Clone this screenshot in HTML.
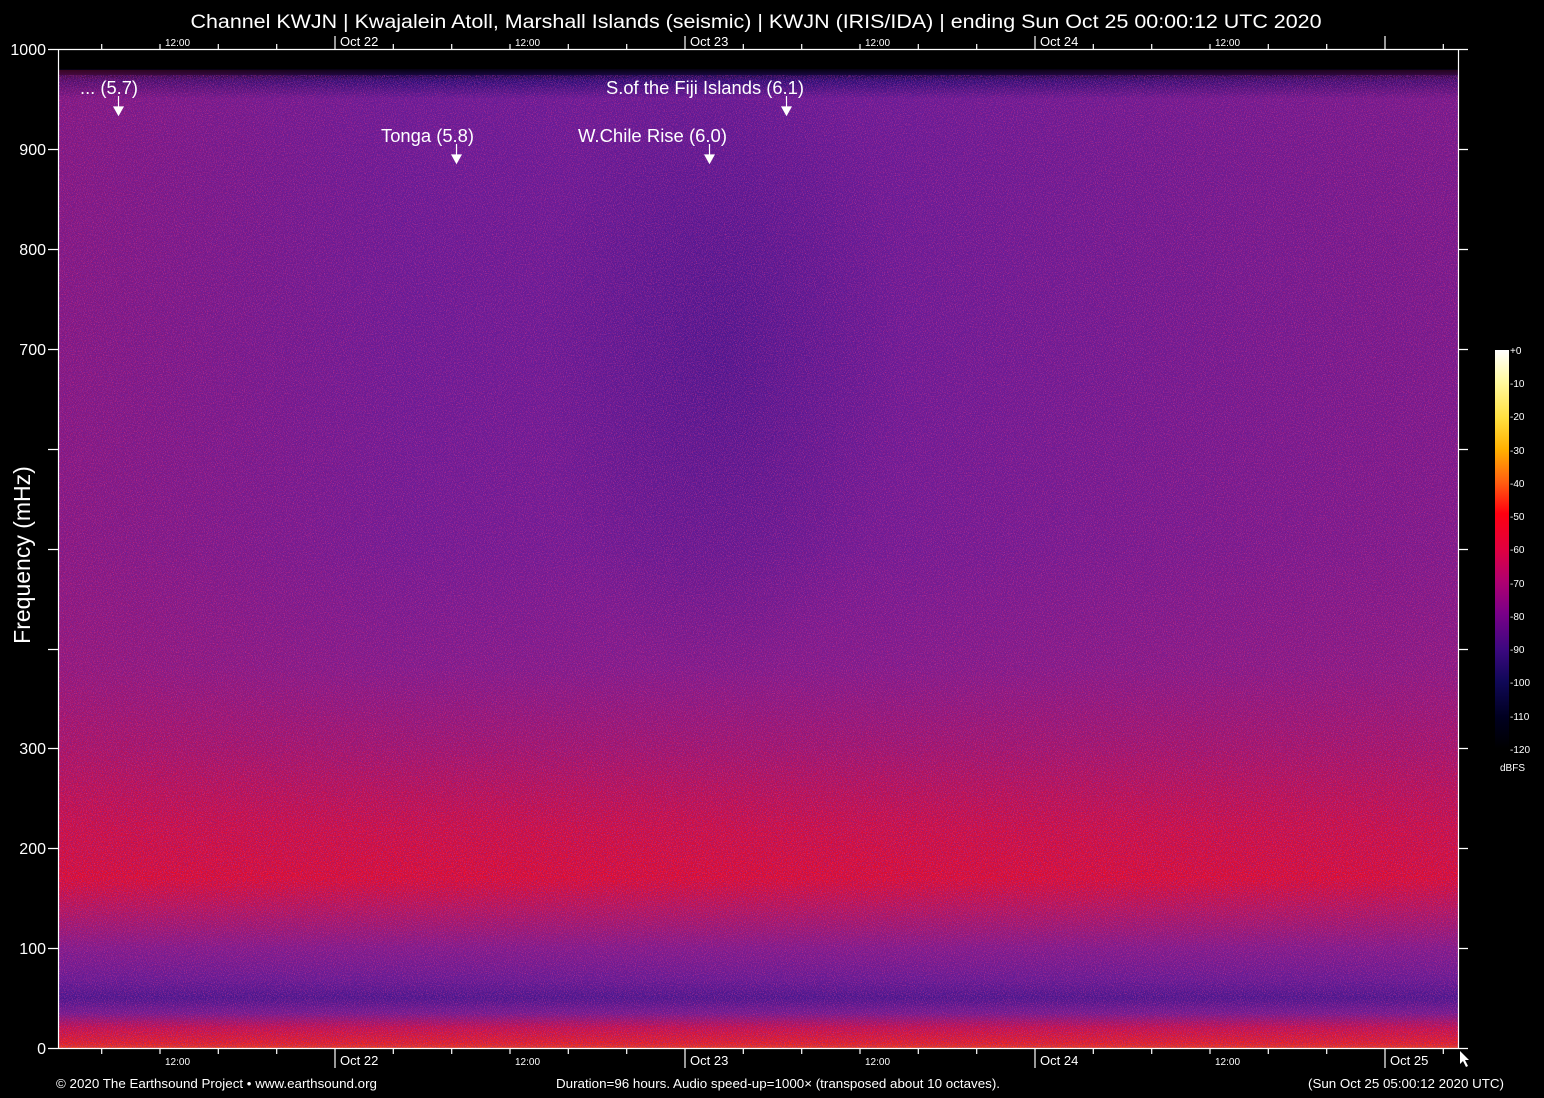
<!DOCTYPE html>
<html><head><meta charset="utf-8"><style>
html,body{margin:0;padding:0;background:#000;width:1544px;height:1098px;overflow:hidden}
svg{display:block}
text{font-family:"Liberation Sans",sans-serif;fill:#fff}
</style></head><body>
<svg width="1544" height="1098" viewBox="0 0 1544 1098" xmlns="http://www.w3.org/2000/svg">
<defs>
<linearGradient id="v" x1="0" y1="49" x2="0" y2="1048" gradientUnits="userSpaceOnUse">
<stop offset="0" stop-color="#000"/>
<stop offset="0.018" stop-color="#000"/>
<stop offset="0.032" stop-color="#2a0d70"/>
<stop offset="0.05" stop-color="#6a1a90"/>
<stop offset="0.3" stop-color="#6c1a90"/>
<stop offset="0.5" stop-color="#741a8e"/>
<stop offset="0.62" stop-color="#861a84"/>
<stop offset="0.7" stop-color="#a81464"/>
<stop offset="0.78" stop-color="#d80e36"/>
<stop offset="0.83" stop-color="#e80c24"/>
<stop offset="0.86" stop-color="#c01450"/>
<stop offset="0.9" stop-color="#861a84"/>
<stop offset="0.93" stop-color="#681a8e"/>
<stop offset="0.95" stop-color="#481588"/>
<stop offset="0.965" stop-color="#761a88"/>
<stop offset="0.98" stop-color="#d01040"/>
<stop offset="0.995" stop-color="#f02018"/>
<stop offset="1" stop-color="#f04010"/>
</linearGradient>
<radialGradient id="dark" cx="720" cy="350" r="260" gradientUnits="userSpaceOnUse" gradientTransform="translate(720 350) scale(0.7 1.3) translate(-720 -350)">
<stop offset="0" stop-color="#2a1080" stop-opacity="0.45"/>
<stop offset="1" stop-color="#2a1080" stop-opacity="0"/>
</radialGradient>
<linearGradient id="h" x1="58" x2="1458" y1="0" y2="0" gradientUnits="userSpaceOnUse">
<stop offset="0" stop-color="#d01040" stop-opacity="0.25"/>
<stop offset="0.25" stop-color="#d01040" stop-opacity="0"/>
<stop offset="0.6" stop-color="#d01040" stop-opacity="0"/>
<stop offset="1" stop-color="#d01040" stop-opacity="0.15"/>
</linearGradient>
<filter id="n" x="0" y="0" width="100%" height="100%">
<feTurbulence type="fractalNoise" baseFrequency="1.2" numOctaves="1" seed="3"/>
<feColorMatrix type="matrix" values="0 0 0 0 0.1  0 0 0 0 0.02  0 0 0 0 0.45  0 0 0 -5 2.6"/>
</filter>
<filter id="n2" x="0" y="0" width="100%" height="100%">
<feTurbulence type="fractalNoise" baseFrequency="1.1" numOctaves="1" seed="9"/>
<feColorMatrix type="matrix" values="0 0 0 0 0.9  0 0 0 0 0.05  0 0 0 0 0.3  0 0 0 -5 2.5"/>
</filter>
</defs>
<rect x="58" y="49" width="1400" height="999" fill="url(#v)"/>
<rect x="58" y="70" width="1400" height="800" fill="url(#h)"/>
<rect x="450" y="100" width="550" height="600" fill="url(#dark)"/>
<rect x="58" y="75" width="1400" height="973" filter="url(#n2)" opacity="0.5"/>
<rect x="58" y="75" width="1400" height="973" filter="url(#n)" opacity="0.6"/>
<rect x="58" y="49" width="1400" height="20" fill="#000"/>
<g stroke="#fff" stroke-width="1.2" fill="none">
<line x1="58" y1="49.5" x2="1468" y2="49.5"/>
<line x1="58" y1="1048.5" x2="1468" y2="1048.5"/>
<line x1="58.5" y1="49" x2="58.5" y2="1048"/>
<line x1="1458.5" y1="49" x2="1458.5" y2="1048"/>
<path d="M48 49.5h10M48 149.5h10M48 249.5h10M48 349.5h10M48 449.5h10M48 549.5h10M48 649.5h10M48 748.5h10M48 848.5h10M48 948.5h10M48 1048.5h10"/>
<path d="M1458 149.5h10M1458 249.5h10M1458 349.5h10M1458 449.5h10M1458 549.5h10M1458 649.5h10M1458 748.5h10M1458 848.5h10M1458 948.5h10"/>
<path d="M101.7 44v5M160 44v5M218.3 44v5M276.7 44v5M335 36v13M393.3 44v5M451.7 44v5M510 44v5M568.3 44v5M626.7 44v5M685 36v13M743.3 44v5M801.7 44v5M860 44v5M918.3 44v5M976.7 44v5M1035 36v13M1093.3 44v5M1151.7 44v5M1210 44v5M1268.3 44v5M1326.7 44v5M1385 36v13M1443.3 44v5"/>
<path d="M101.7 1048v6M160 1048v6M218.3 1048v6M276.7 1048v6M335 1048v20M393.3 1048v6M451.7 1048v6M510 1048v6M568.3 1048v6M626.7 1048v6M685 1048v20M743.3 1048v6M801.7 1048v6M860 1048v6M918.3 1048v6M976.7 1048v6M1035 1048v20M1093.3 1048v6M1151.7 1048v6M1210 1048v6M1268.3 1048v6M1326.7 1048v6M1385 1048v20M1443.3 1048v6"/>
</g>
<text x="756" y="28" font-size="19" text-anchor="middle" textLength="1131" lengthAdjust="spacingAndGlyphs">Channel KWJN | Kwajalein Atoll, Marshall Islands (seismic) | KWJN (IRIS/IDA) | ending Sun Oct 25 00:00:12 UTC 2020</text>
<g font-size="16" text-anchor="end">
<text x="46" y="55">1000</text><text x="46" y="155">900</text><text x="46" y="255">800</text><text x="46" y="355">700</text>
<text x="46" y="754">300</text><text x="46" y="854">200</text><text x="46" y="954">100</text><text x="46" y="1054">0</text>
</g>
<text transform="translate(30 555) rotate(-90)" font-size="23" text-anchor="middle">Frequency (mHz)</text>
<g font-size="10">
<text x="165" y="46">12:00</text><text x="515" y="46">12:00</text><text x="865" y="46">12:00</text><text x="1215" y="46">12:00</text>
<text x="165" y="1065">12:00</text><text x="515" y="1065">12:00</text><text x="865" y="1065">12:00</text><text x="1215" y="1065">12:00</text>
</g>
<g font-size="13">
<text x="340" y="46">Oct 22</text><text x="690" y="46">Oct 23</text><text x="1040" y="46">Oct 24</text>
<text x="340" y="1065">Oct 22</text><text x="690" y="1065">Oct 23</text><text x="1040" y="1065">Oct 24</text><text x="1390" y="1065">Oct 25</text>
</g>
<g font-size="18">
<text x="80" y="94" textLength="58" lengthAdjust="spacingAndGlyphs">... (5.7)</text>
<text x="381" y="142" textLength="93" lengthAdjust="spacingAndGlyphs">Tonga (5.8)</text>
<text x="606" y="94" textLength="198" lengthAdjust="spacingAndGlyphs">S.of the Fiji Islands (6.1)</text>
<text x="578" y="142" textLength="149" lengthAdjust="spacingAndGlyphs">W.Chile Rise (6.0)</text>
</g>
<g fill="#fff" stroke="#fff" stroke-width="1.2">
<line x1="118.5" y1="96" x2="118.5" y2="108"/><path d="M114 107h9l-4.5 8z"/>
<line x1="456.5" y1="144" x2="456.5" y2="156"/><path d="M452 155h9l-4.5 8z"/>
<line x1="786.5" y1="96" x2="786.5" y2="108"/><path d="M782 107h9l-4.5 8z"/>
<line x1="709.5" y1="144" x2="709.5" y2="156"/><path d="M705 155h9l-4.5 8z"/>
</g>
<path d="M1460 1051v13l3-3 3 6 2-1-3-6h4z" fill="#fff"/>
<g font-size="13">
<text x="56" y="1088" textLength="321" lengthAdjust="spacingAndGlyphs">© 2020 The Earthsound Project • www.earthsound.org</text>
<text x="556" y="1088" textLength="444" lengthAdjust="spacingAndGlyphs">Duration=96 hours. Audio speed-up=1000× (transposed about 10 octaves).</text>
<text x="1308" y="1088" textLength="196" lengthAdjust="spacingAndGlyphs">(Sun Oct 25 05:00:12 2020 UTC)</text>
</g>
<linearGradient id="cb" x1="0" y1="350" x2="0" y2="749" gradientUnits="userSpaceOnUse">
<stop offset="0" stop-color="#ffffff"/><stop offset="0.08" stop-color="#fffaa0"/>
<stop offset="0.17" stop-color="#ffe040"/><stop offset="0.25" stop-color="#ffb000"/>
<stop offset="0.33" stop-color="#ff6010"/><stop offset="0.41" stop-color="#ff0010"/>
<stop offset="0.5" stop-color="#e00040"/><stop offset="0.58" stop-color="#b00070"/>
<stop offset="0.66" stop-color="#7a0088"/><stop offset="0.75" stop-color="#3c0880"/>
<stop offset="0.83" stop-color="#100858"/><stop offset="0.92" stop-color="#000020"/>
<stop offset="1" stop-color="#000"/></linearGradient>
<rect x="1495" y="350" width="14" height="399" fill="url(#cb)"/>
<g font-size="10" fill="#ddd">
<text x="1510" y="354">+0</text><text x="1510" y="387">-10</text><text x="1510" y="420">-20</text><text x="1510" y="454">-30</text>
<text x="1510" y="487">-40</text><text x="1510" y="520">-50</text><text x="1510" y="553">-60</text><text x="1510" y="587">-70</text>
<text x="1510" y="620">-80</text><text x="1510" y="653">-90</text><text x="1510" y="686">-100</text><text x="1510" y="720">-110</text>
<text x="1510" y="753">-120</text><text x="1500" y="771">dBFS</text>
</g>
</svg>
</body></html>
